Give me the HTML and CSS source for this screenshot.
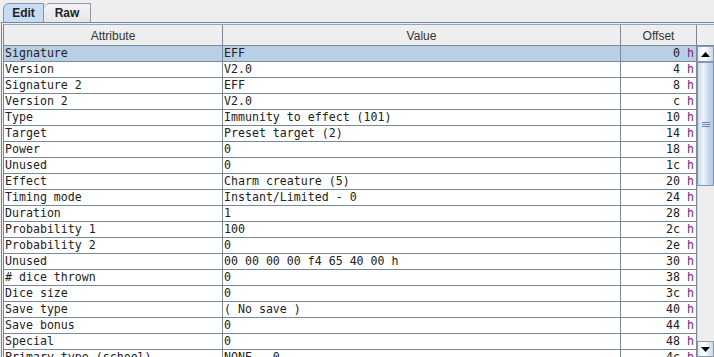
FILE: index.html
```html
<!DOCTYPE html>
<html lang="en">
<head>
    <meta charset="UTF-8">
    <title>EFF Editor</title>
    <link rel="stylesheet" href="styles.css">
</head>
<body>
    <div class="tabs">
        <div class="tab tab-edit active">Edit</div>
        <div class="tab tab-raw">Raw</div>
    </div>

    <div class="panel">
        <div class="scroll-pane">
            <!-- Column header -->
            <div class="table-head">
                <div class="th col-attr">Attribute</div>
                <div class="th col-value">Value</div>
                <div class="th col-offset">Offset</div>
                <div class="th corner"></div>
            </div>

            <div class="table-body">
                <div class="rows" id="rows"></div>

                <!-- Vertical scrollbar -->
                <div class="vbar">
                    <div class="vbar-btn">
                        <svg width="9" height="5" viewBox="0 0 9 5"><path d="M0 5 L4.5 0 L9 5 Z" fill="#000"/></svg>
                    </div>
                    <div class="vbar-thumb">
                        <span class="grip"></span><span class="grip"></span><span class="grip"></span>
                    </div>
                    <div class="vbar-track"></div>
                    <div class="vbar-btn">
                        <svg width="9" height="5" viewBox="0 0 9 5"><path d="M0 0 L4.5 5 L9 0 Z" fill="#000"/></svg>
                    </div>
                </div>
            </div>
        </div>
    </div>

    <script>
        // Fields of the effect structure: attribute, value, offset
        const fields = [
            ['Signature', 'EFF', '0'],
            ['Version', 'V2.0', '4'],
            ['Signature 2', 'EFF', '8'],
            ['Version 2', 'V2.0', 'c'],
            ['Type', 'Immunity to effect (101)', '10'],
            ['Target', 'Preset target (2)', '14'],
            ['Power', '0', '18'],
            ['Unused', '0', '1c'],
            ['Effect', 'Charm creature (5)', '20'],
            ['Timing mode', 'Instant/Limited - 0', '24'],
            ['Duration', '1', '28'],
            ['Probability 1', '100', '2c'],
            ['Probability 2', '0', '2e'],
            ['Unused', '00 00 00 00 f4 65 40 00 h', '30'],
            ['# dice thrown', '0', '38'],
            ['Dice size', '0', '3c'],
            ['Save type', '( No save )', '40'],
            ['Save bonus', '0', '44'],
            ['Special', '0', '48'],
            ['Primary type (school)', 'NONE - 0', '4c']
        ];

        const rows = document.getElementById('rows');
        fields.forEach(function (f, i) {
            const row = document.createElement('div');
            row.className = 'row' + (i === 0 ? ' selected' : '');

            const attr = document.createElement('div');
            attr.className = 'td col-attr';
            attr.textContent = f[0];

            const value = document.createElement('div');
            value.className = 'td col-value';
            value.textContent = f[1];

            const offset = document.createElement('div');
            offset.className = 'td col-offset';
            offset.innerHTML = f[2] + ' <span class="hex">h</span>';

            row.appendChild(attr);
            row.appendChild(value);
            row.appendChild(offset);
            rows.appendChild(row);
        });
    </script>
</body>
</html>
```

FILE: styles.css
```css
body {
    margin: 0;
    height: 357px;
    overflow: hidden;
    background-color: #eeeeee;
    font-family: "Liberation Sans", Arial, sans-serif;
    font-size: 12px;
    color: #222;
}

/* Tabs */
.tabs {
    display: flex;
    align-items: flex-end;
    height: 22px;
    padding-left: 3px;
    box-sizing: border-box;
}

.tab {
    height: 19px;
    box-sizing: border-box;
    border: 1px solid #8e9aa8;
    border-bottom: none;
    border-top-left-radius: 6px;
    font-weight: bold;
    line-height: 19px;
    text-align: center;
    color: #222;
}

.tab-edit {
    width: 41px;
    background-color: #c8ddf2;
    border-color: #7f94b8;
}

.tab-raw {
    width: 47px;
    border-left: none;
    background: linear-gradient(#f4f4f4, #e6e6e6);
}

/* Tab content */
.panel {
    margin-left: 1px;
    border-top: 1px solid #6f86b4;
    border-left: 1px solid #6f86b4;
    padding: 1px 0 0 1px;
}

.scroll-pane {
    border-top: 1px solid #9aa4ae;
    border-left: 1px solid #7a8a99;
}

.table-head {
    display: flex;
    height: 21px;
}

.th {
    box-sizing: border-box;
    height: 21px;
    border-right: 1px solid #7a8a99;
    border-bottom: 1px solid #7a8a99;
    text-align: center;
    line-height: 23px;
    background-color: #eeeeee;
    color: #333;
}

.col-attr {
    width: 219px;
}

.col-value {
    width: 398px;
}

.col-offset {
    width: 76px;
}

.th.corner {
    flex: 1;
    border-right: none;
}

.table-body {
    display: flex;
}

.rows {
    width: 693px;
    background-color: #fff;
}

.row {
    display: flex;
}

.td {
    box-sizing: border-box;
    height: 16px;
    border-right: 1px solid #7a8a99;
    border-bottom: 1px solid #7a8a99;
    padding-left: 1px;
    font-family: "DejaVu Sans Mono", monospace;
    font-size: 11.6px;
    line-height: 15px;
    white-space: nowrap;
    overflow: hidden;
}

.td.col-offset {
    text-align: right;
    padding-right: 2px;
}

.hex {
    color: #7a1f78;
}

.row.selected .td {
    background-color: #b8cfe5;
}

/* Scrollbar */
.vbar {
    display: flex;
    flex-direction: column;
    width: 17px;
    height: 311px;
}

.vbar-btn {
    display: flex;
    align-items: center;
    justify-content: center;
    height: 16px;
    box-sizing: border-box;
    border: 1px solid #8e9aa8;
    background: linear-gradient(90deg, #e4ecf5, #ffffff 40%, #c9d8e8);
}

.vbar-thumb {
    display: flex;
    flex-direction: column;
    align-items: center;
    justify-content: center;
    gap: 1px;
    height: 124px;
    box-sizing: border-box;
    border: 1px solid #7f94b8;
    background: linear-gradient(90deg, #c8d9ec, #eef3f9 35%, #c4d6ea 75%, #b3c9e1);
}

.grip {
    width: 8px;
    height: 1px;
    background-color: #6f86b4;
}

.vbar-track {
    flex: 1;
    background-color: #eeeeee;
    border-left: 1px solid #d8d8d8;
}
```
